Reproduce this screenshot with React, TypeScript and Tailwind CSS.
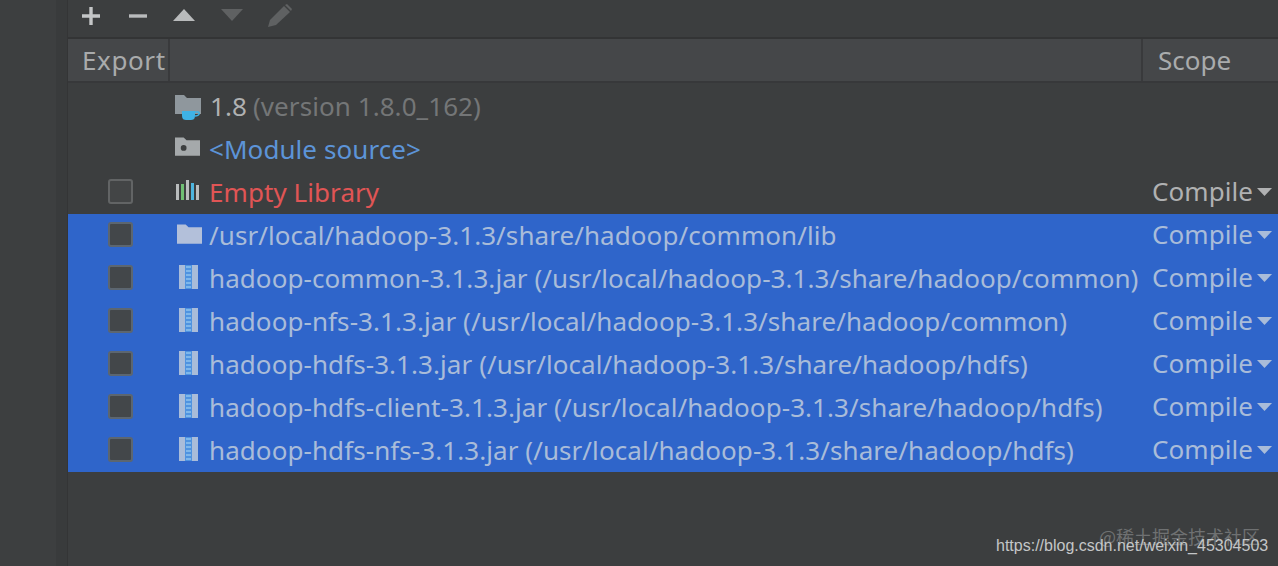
import React from 'react';

const FolderPlain = ({ color = '#aab0b5' }: { color?: string }) => (
  <svg width="25" height="21" viewBox="0 0 26 21" className="ml-[2px] mt-[0px]">
    <path d="M0 0h9l3 3h14v17H0z" fill={color} />
  </svg>
);

const SdkIcon = () => (
  <svg width="28" height="26" viewBox="0 0 28 26" className="ml-[3px] mt-[5px]">
    <path d="M0 0h9l3 3h14v16H0z" fill="#8f979d" />
    <path d="M7 16h13v5c0 3-2 4-4 4h-5c-2 0-4-1-4-4z" fill="#3fb2e6" />
    <path d="M20 17h3c2 0 2 4-3 4" fill="none" stroke="#3fb2e6" strokeWidth="1.4" />
  </svg>
);

const ModuleIcon = () => (
  <svg width="25" height="20" viewBox="0 0 26 20" className="ml-[3px] -mt-[4px]">
    <path d="M0 0h9l3 3h14v16H0z" fill="#a5a9ab" />
    <circle cx="9" cy="11" r="3" fill="#3c3e3f" />
  </svg>
);

const LibraryIcon = () => (
  <svg width="26" height="22" viewBox="0 0 26 22" className="ml-[1px] -mt-[1px]">
    <rect x="0" y="4" width="3" height="16" fill="#b9bcbd" />
    <rect x="5" y="4" width="3" height="16" fill="#6fbf73" />
    <rect x="10" y="0" width="3" height="20" fill="#b9bcbd" />
    <rect x="15" y="3" width="3" height="17" fill="#4db6e0" />
    <rect x="20" y="5" width="3" height="15" fill="#b9bcbd" />
  </svg>
);

const JarIcon = () => (
  <svg width="20" height="26" viewBox="0 0 20 26" className="ml-[2px] -mt-[1px]">
    <rect x="0" y="1" width="6" height="24" fill="#a9bcd9" />
    <rect x="13" y="1" width="6" height="24" fill="#a9bcd9" />
    <path d="M6 1h7v24H6z" fill="#4f93e0" />
    <path d="M7 3h5M7 7h5M7 11h5M7 15h5M7 19h5M7 23h5" stroke="#8fc4ee" strokeWidth="1.6" />
  </svg>
);

const Caret = ({ color }: { color: string }) => (
  <svg width="15" height="8" viewBox="0 0 15 8" className="ml-[4px] mt-[3px]">
    <path d="M0 0h15L7.500 8z" fill={color} />
  </svg>
);

const Scope = ({ selected }: { selected?: boolean }) => (
  <div className={`-mt-[2px] flex w-[136px] items-center pl-[10px] ${selected ? 'text-[#a9bcd9]' : 'text-[#b0b1b2]'}`}>
    <span>Compile</span>
    <Caret color={selected ? '#a9bcd9' : '#b0b1b2'} />
  </div>
);

const Check = ({ selected }: { selected?: boolean }) => (
  <div className="flex w-[102px] justify-center pl-[2px]">
    <div
      className={`h-[25px] w-[25px] rounded-[3px] border-2 ${
        selected ? 'border-[#5c6670] bg-[#43474a]' : 'border-[#626465] bg-[#434546]'
      }`}
    />
  </div>
);

const jars = [
  ['hadoop-common-3.1.3.jar', '(/usr/local/hadoop-3.1.3/share/hadoop/common)'],
  ['hadoop-nfs-3.1.3.jar', '(/usr/local/hadoop-3.1.3/share/hadoop/common)'],
  ['hadoop-hdfs-3.1.3.jar', '(/usr/local/hadoop-3.1.3/share/hadoop/hdfs)'],
  ['hadoop-hdfs-client-3.1.3.jar', '(/usr/local/hadoop-3.1.3/share/hadoop/hdfs)'],
  ['hadoop-hdfs-nfs-3.1.3.jar', '(/usr/local/hadoop-3.1.3/share/hadoop/hdfs)'],
];

export default function App() {
  return (
    <div
      className="relative flex h-[566px] w-[1278px] overflow-hidden bg-[#3c3e3f] text-[26px] leading-none"
      style={{ fontFamily: '"Noto Sans", "Open Sans", sans-serif' }}
    >
      <div className="w-[56px] shrink-0 bg-[#3d3f40]" />
      <div className="w-[11px] shrink-0 bg-[#393b3c]" />

      <div className="flex min-w-0 flex-1 flex-col border-l border-[#343536]">
        {/* toolbar */}
        <div className="flex h-[39px] items-center border-b-2 border-[#333435] pb-[6px] pl-[13px]">
          <svg width="20" height="20" viewBox="0 0 20 20" className="mr-[27px]">
            <path d="M10 1v18M1 10h18" stroke="#c4c6c7" strokeWidth="3.400" />
          </svg>
          <svg width="20" height="20" viewBox="0 0 20 20" className="mr-[25px]">
            <path d="M1 10h18" stroke="#b9bbbc" strokeWidth="3.400" />
          </svg>
          <svg width="22" height="13" viewBox="0 0 22 13" className="mr-[26px]">
            <path d="M11 0l11 12H0z" fill="#b9bbbc" />
          </svg>
          <svg width="22" height="13" viewBox="0 0 22 13" className="mr-[24px]">
            <path d="M0 0h22L11 12z" fill="#5f6162" />
          </svg>
          <svg width="26" height="26" viewBox="0 0 26 26">
            <path d="M1 24l2-7L17 3l6 6L9 22z" fill="#5f6162" />
            <path d="M18 2l2-1 5 5-1 2z" fill="#5f6162" />
          </svg>
        </div>

        {/* header */}
        <div className="flex h-[44px] items-center border-b-2 border-[#37383a] bg-[#454749] text-[#a9abac]">
          <div className="flex h-full w-[102px] items-center border-r-2 border-[#393a3c] pl-[14px] tracking-[0.6px]">Export</div>
          <div className="h-full flex-1 border-r-2 border-[#393a3c]" />
          <div className="w-[135px] pl-[15px]">Scope</div>
        </div>

        <div className="mt-[2px] flex flex-col tracking-[0.07px]">
          <div className="flex h-[43px] items-center pb-[2px]">
            <div className="w-[104px]" />
            <div className="w-[38px]"><SdkIcon /></div>
            <span className="text-[#b0b1b2]">1.8</span>
            <span className="ml-[6px] text-[#747677]">(version 1.8.0_162)</span>
          </div>
          <div className="flex h-[43px] items-center pb-[2px]">
            <div className="w-[104px]" />
            <div className="w-[37px]"><ModuleIcon /></div>
            <span className="text-[#5c94d8]">&lt;Module source&gt;</span>
          </div>
          <div className="flex h-[43px] items-center pb-[2px]">
            <Check />
            <div className="ml-[5px] w-[34px]"><LibraryIcon /></div>
            <span className="flex-1 text-[#e05555]">Empty Library</span>
            <Scope />
          </div>

          <div className="bg-[#2f65ca] text-[#a9bcd9]">
            <div className="flex h-[43px] items-center pb-[2px]">
              <Check selected />
              <div className="ml-[5px] w-[34px]"><FolderPlain color="#b3c0da" /></div>
              <span className="flex-1">/usr/local/hadoop-3.1.3/share/hadoop/common/lib</span>
              <Scope selected />
            </div>
            {jars.map(([name, path]) => (
              <div key={name} className="flex h-[43px] items-center pb-[2px]">
                <Check selected />
                <div className="ml-[7px] w-[32px]"><JarIcon /></div>
                <span className="min-w-0 flex-1 whitespace-nowrap">{name} {path}</span>
                <Scope selected />
              </div>
            ))}
          </div>
        </div>
      </div>

      {/* watermarks */}
      <div
        className="absolute left-[1099px] top-[527px] text-[18px] text-[#6f7172]"
        style={{ fontFamily: '"Noto Sans CJK SC", sans-serif' }}
      >
        @稀土掘金技术社区
      </div>
      <div
        className="absolute left-[996px] top-[538px] text-[16px] text-[#c4c6c7]"
        style={{ fontFamily: '"Liberation Sans", sans-serif' }}
      >
        https://blog.csdn.net/weixin_45304503
      </div>
    </div>
  );
}
